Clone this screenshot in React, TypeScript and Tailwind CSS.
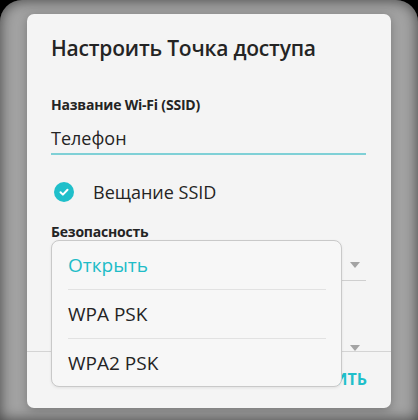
import React from 'react';

const font = { fontFamily: '"Open Sans", "Noto Sans", sans-serif' };

const Arrow: React.FC = () => (
  <svg width="10" height="6" viewBox="0 0 10 6">
    <path d="M0 0h10L5 6z" fill="#a3a3a3" />
  </svg>
);

const App: React.FC = () => {
  const options = ['Открыть', 'WPA PSK', 'WPA2 PSK'];

  return (
    <div className="w-[418px] h-[420px] bg-black overflow-hidden" style={font}>
      <div className="w-full h-full rounded-t-[22px] bg-[#a2a2a2] shadow-[inset_0_0_14px_rgba(0,0,0,0.6)] pt-[14px] pl-[27px]">
        {/* Dialog */}
        <div className="relative w-[364px] h-[394px] bg-[#f4f4f4] rounded-[7px] shadow-[0_2px_10px_rgba(0,0,0,0.25)] pl-[24px] pr-[25px] pt-[22px] flex flex-col text-[#242424]">
          <div className="h-[26px] flex items-center text-[21px] font-semibold tracking-[-0.2px]">
            Настроить Точка доступа
          </div>

          <div className="mt-[32px] h-[20px] flex items-center text-[14px] font-bold tracking-[-0.2px]">
            Название Wi-Fi (SSID)
          </div>
          <div className="mt-[12px] h-[24px] flex items-center text-[18px] font-medium">Телефон</div>
          <div className="mt-[3px] h-[2px] bg-[#7fd0d6]" />

          <div className="mt-[23px] h-[28px] flex items-center">
            <div className="ml-[3px] w-[20px] h-[20px] rounded-full bg-[#1fbfca] flex items-center justify-center">
              <svg width="12" height="12" viewBox="0 0 12 12">
                <path d="M2.5 6.2l2.4 2.4 4.6-4.8" fill="none" stroke="#fff" strokeWidth="2" strokeLinecap="round" strokeLinejoin="round" />
              </svg>
            </div>
            <span className="ml-[19px] text-[18px] font-medium">Вещание SSID</span>
          </div>

          <div className="mt-[15px] h-[20px] flex items-center text-[14px] font-bold tracking-[-0.2px]">Безопасность</div>

          {/* spinner under the open list */}
          <div className="h-[39px] flex justify-end items-start pt-[21px] pr-[6px]">
            <Arrow />
          </div>
          <div className="h-[1px] bg-[#cfcfcf]" />

          <div className="mt-[64px] flex justify-end pr-[6px]">
            <Arrow />
          </div>
          <div className="-ml-[24px] -mr-[25px] h-[1px] bg-[#d4d4d4]" />

          <div className="mt-[13px] h-[28px] flex items-center justify-end text-[16px] font-bold text-[#1fbfca] -mr-[1px]">
            СОХРАНИТЬ
          </div>

          {/* Open dropdown list */}
          <div className="absolute left-[24px] top-[226px] w-[291px] h-[147px] rounded-[8px] border border-[#c9c9c9] bg-[#f7f7f7] shadow-[0_1px_3px_rgba(0,0,0,0.08)] flex flex-col">
            {options.map((opt, i) => (
              <div key={opt} className="flex flex-col">
                {i > 0 && <div className="ml-[16px] mr-[15px] h-[1px] bg-[#e2e2e2]" />}
                <div
                  className={`h-[48px] flex items-center pl-[16px] text-[19px] font-medium ${
                    i === 0 ? 'text-[#20bcc7]' : 'text-[#242424]'
                  }`}
                >
                  {opt}
                </div>
              </div>
            ))}
          </div>
        </div>
      </div>
    </div>
  );
};

export default App;
